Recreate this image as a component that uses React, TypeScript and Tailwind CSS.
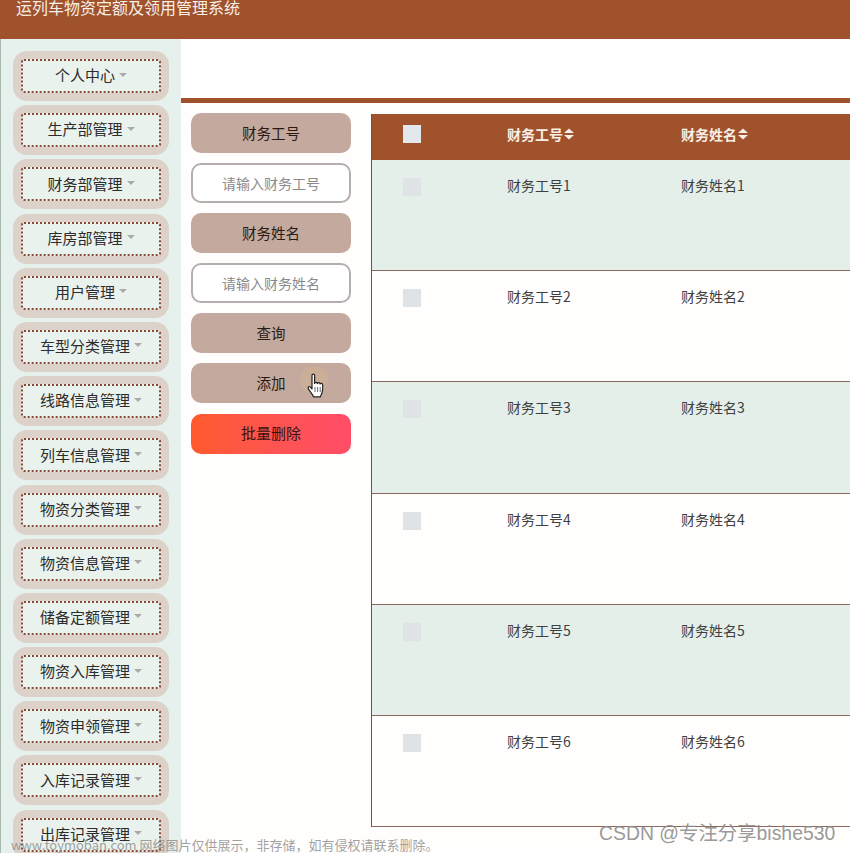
const cjk = "font-['Noto_Sans_CJK_SC','Liberation_Sans',sans-serif]"

const menus = [
    "个人中心",
    "生产部管理",
    "财务部管理",
    "库房部管理",
    "用户管理",
    "车型分类管理",
    "线路信息管理",
    "列车信息管理",
    "物资分类管理",
    "物资信息管理",
    "储备定额管理",
    "物资入库管理",
    "物资申领管理",
    "入库记录管理",
    "出库记录管理",
]

const rows = [1, 2, 3, 4, 5, 6]

function SortIcon() {
    return (
        <svg width="10" height="12" viewBox="0 0 10 12" className="ml-px">
            <path d="M5 0.5 L10 5 H0 Z M0 7 H10 L5 11.5 Z" fill="#f7eee8" />
        </svg>
    )
}

function HandCursor() {
    return (
        <svg width="20" height="26" viewBox="0 0 20 26">
            <path
                d="M5 2.2c0-1.5 2.6-1.5 2.6 0v8.2c.2-1.4 2.7-1.4 2.8.2.3-1.3 2.6-1.2 2.7.4.5-1.1 2.5-.9 2.6.7.1 2.6.1 5-.5 7.2-.5 1.9-1.2 3.4-1.8 5H6.6c-1-2.4-2.9-4.4-4.6-7-.9-1.4-1.4-3 .1-3.3 1-.2 2 .8 2.9 2.3V2.2z"
                fill="#fff"
                stroke="#222"
                strokeWidth="1.2"
                strokeLinejoin="round"
            />
            <path d="M8 14v5M10.6 14v5M13.2 14v5" stroke="#444" strokeWidth="0.8" />
        </svg>
    )
}

function Label({ text }: { text: string }) {
    return (
        <div className="h-10 shrink-0 rounded-[10px] bg-[#c4a99e] flex items-center justify-center pb-px text-[14.5px] text-[#2b1a14]">
            {text}
        </div>
    )
}

function Field({ text }: { text: string }) {
    return (
        <div className="h-10 shrink-0 rounded-[10px] bg-white border-2 border-[#b5adb0] flex items-center justify-center text-sm text-[#8b8b8b]">
            {text}
        </div>
    )
}

export default function App() {
    return (
        <div className={`relative w-[850px] h-[853px] overflow-hidden bg-[#fffefc] ${cjk}`}>
            <header className="h-[39px] bg-[#a0522d] pl-4 text-base leading-[14px] text-[#f8efe6] overflow-hidden">
                运列车物资定额及领用管理系统
            </header>

            <div className="flex h-[814px]">
                <aside className="w-[181px] shrink-0 bg-[#e6f0ec] border-l border-[#a9b8ae] pl-3 pt-3 flex flex-col gap-[4.2px] overflow-hidden">
                    {menus.map((m) => (
                        <div
                            key={m}
                            className="w-[156px] h-[50px] shrink-0 rounded-[14px] bg-[#eaf2ee] border-8 border-[#ddd2ca] flex"
                        >
                            <div className="flex-1 rounded-[3px] border-2 border-dotted border-[#8a4a38] flex items-center justify-center gap-1 pb-px text-[#2c2c2c]">
                                <span className="text-[15px]">{m}</span>
                                <span className="w-0 h-0 mt-[-2px] border-x-4 border-x-transparent border-t-[4px] border-t-[#aaa]" />
                            </div>
                        </div>
                    ))}
                </aside>

                <main className="flex-1 min-w-0">
                    <div className="h-[59px] bg-white" />
                    <div className="h-[5px] bg-[#a0522d]" />
                    <div className="flex pt-2.5 pl-2.5">
                        <div className="w-40 shrink-0 flex flex-col gap-[10.1px]">
                            <Label text="财务工号" />
                            <Field text="请输入财务工号" />
                            <Label text="财务姓名" />
                            <Field text="请输入财务姓名" />
                            <Label text="查询" />
                            <div className="relative">
                                <Label text="添加" />
                                <div className="absolute left-[109px] top-[3px] w-7 h-7 rounded-full bg-[#cbae96]" />
                                <div className="absolute left-[116px] top-[10px]">
                                    <HandCursor />
                                </div>
                            </div>
                            <div className="h-10 rounded-[10px] bg-gradient-to-r from-[#ff5a2c] to-[#ff4d68] flex items-center justify-center text-[15px] text-[#3a1210]">
                                批量删除
                            </div>
                        </div>

                        <div className="ml-5 flex-1 min-w-0 mt-px border-l border-[#6b5548]">
                            <div className="h-[46px] bg-[#a0522d] pb-1.5 grid grid-cols-[135px_174px_1fr] items-center text-sm font-bold text-[#f8efe6]">
                                <div className="pl-[31px]">
                                    <div className="w-[18px] h-[18px] bg-[#e3e8ec]" />
                                </div>
                                <div className="flex items-center">
                                    财务工号
                                    <SortIcon />
                                </div>
                                <div className="flex items-center">
                                    财务姓名
                                    <SortIcon />
                                </div>
                            </div>
                            {rows.map((n) => (
                                <div
                                    key={n}
                                    className={`h-[111.2px] pt-[13px] border-b border-[#8a6a5c] grid grid-cols-[135px_174px_1fr] text-sm leading-6 text-[#3f3f3f] ${n % 2 === 1 ? "bg-[#e4efea]" : "bg-[#fffefc]"}`}
                                >
                                    <div className="pl-[31px] pt-[5px]">
                                        <div className="w-[18px] h-[18px] bg-[#dfe3e5]" />
                                    </div>
                                    <div>财务工号{n}</div>
                                    <div>财务姓名{n}</div>
                                </div>
                            ))}
                        </div>
                    </div>
                </main>
            </div>

            <div className="absolute left-[11px] top-[837px] text-[13px] leading-4 text-[#8f8f8f]/85 whitespace-nowrap">
                www.toymoban.com 网络图片仅供展示，非存储，如有侵权请联系删除。
            </div>
            <div className="absolute left-[599px] top-[821px] font-['Liberation_Sans','Noto_Sans_CJK_SC',sans-serif] text-[19.4px] leading-6 text-[#8c8c8c]/90 whitespace-nowrap">
                CSDN @专注分享bishe530
            </div>
        </div>
    )
}
